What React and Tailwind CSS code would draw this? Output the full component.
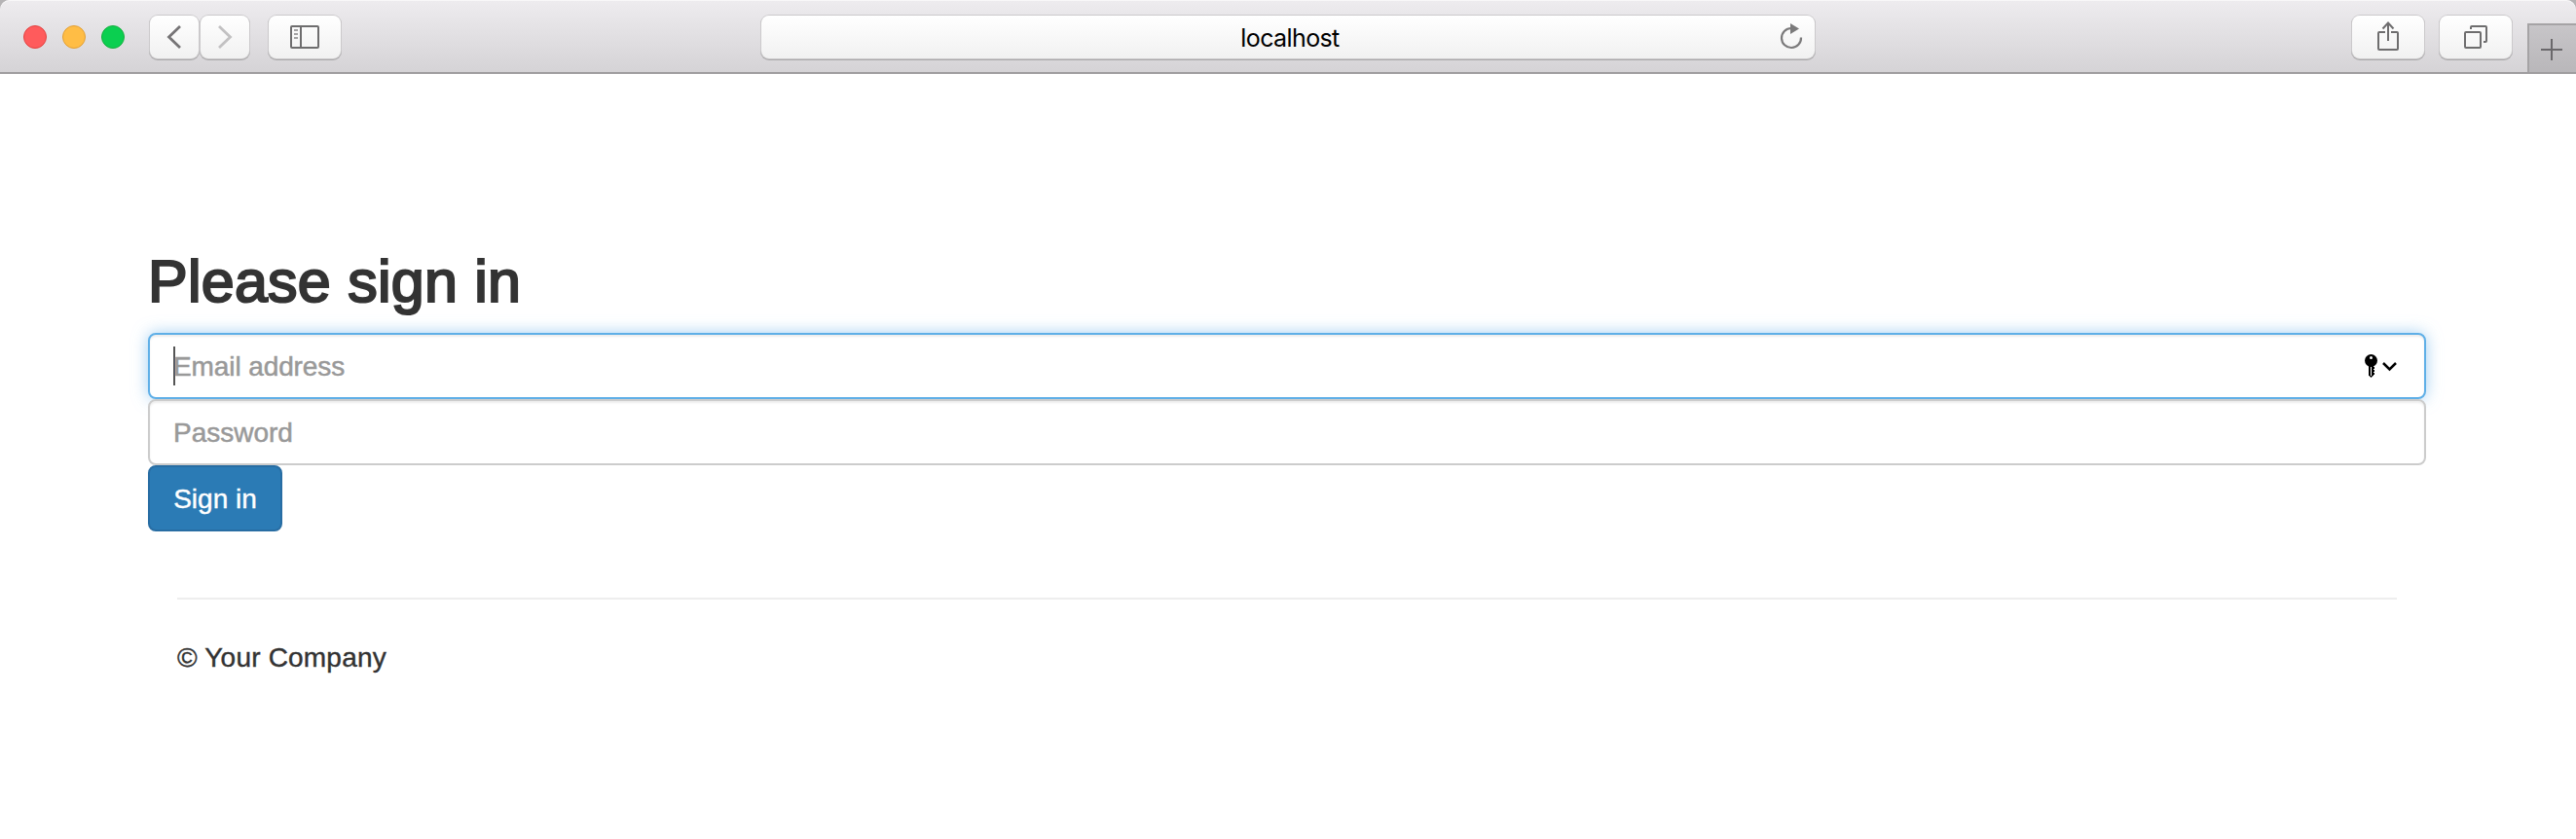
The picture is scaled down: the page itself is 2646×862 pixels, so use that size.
const BUTTON =
  'flex h-[44px] shrink-0 items-center justify-center rounded-[8px] bg-linear-to-b from-white to-[#f1f1f1] shadow-[0_0_0_1px_#cbc9cb,0_1px_0_1px_#a9a8a9]';

function ToolbarButton({ className, label, children }) {
  return (
    <button type="button" aria-label={label} className={`${BUTTON} ${className}`}>
      {children}
    </button>
  );
}

function Toolbar() {
  return (
    <div className="bg-[#b5b3b5]">
      <header className="flex h-[76px] items-start rounded-t-[10px] border-b-2 border-[#9f9d9f] bg-linear-to-b from-[#eeecef] to-[#d5d3d6] pl-6 shadow-[inset_0_1px_0_#f8f7f8]">
        <div className="mt-[26px] flex gap-4">
          <span className="size-6 rounded-full border border-[#e2413f] bg-[#ff5b5c]" />
          <span className="size-6 rounded-full border border-[#e29f34] bg-[#ffbd45]" />
          <span className="size-6 rounded-full border border-[#16ae3e] bg-[#0bcf50]" />
        </div>

        <div className="mt-[16px] ml-[26px] flex gap-[2px]">
          <ToolbarButton label="Back" className="w-[50px]">
            <svg width="50" height="44" fill="none" stroke="#767476" strokeWidth="2.8">
              <path d="M31 11 19.500 22 31 33" />
            </svg>
          </ToolbarButton>
          <ToolbarButton label="Forward" className="w-[50px]">
            <svg width="50" height="44" fill="none" stroke="#c2c1c2" strokeWidth="2.8">
              <path d="M19 11 30.500 22 19 33" />
            </svg>
          </ToolbarButton>
        </div>

        <ToolbarButton label="Sidebar" className="mt-[16px] ml-[20px] w-[74px]">
          <svg width="74" height="44" fill="none" stroke="#6e6d6e" strokeWidth="2">
            <rect x="23" y="11" width="28" height="22" rx="1" />
            <path d="M33 11v22" />
            <path d="M26 15h4M26 19h4M26 23h4" stroke="#a3a2a3" />
          </svg>
        </ToolbarButton>

        <div className={`${BUTTON} relative mt-[16px] ml-[432px] w-[1082px]`}>
          <span className="relative top-[1px] left-[2px] font-['Inter',sans-serif] text-[25px] leading-[44px] tracking-[-0.6px] text-black">
            localhost
          </span>
          <svg className="absolute top-0 right-0" width="50" height="44" fill="none">
            <path d="M26 13a10 10 0 1 0 10 9.500" stroke="#7b7a7b" strokeWidth="2.200" />
            <path d="M25 8v11l9-5.500z" fill="#7b7a7b" />
          </svg>
        </div>

        <ToolbarButton label="Share" className="mt-[16px] ml-[552px] w-[74px]">
          <svg width="74" height="44" fill="none" stroke="#6e6d6e" strokeWidth="2">
            <path d="M34 17h-6q-1 0-1 1v16q0 1 1 1h18q1 0 1-1V18q0-1-1-1h-6" />
            <path d="M37 26V8M31.500 13.500 37 7.500l5.500 6" />
          </svg>
        </ToolbarButton>
        <ToolbarButton label="Tabs" className="mt-[16px] ml-[16px] w-[74px]">
          <svg width="74" height="44" fill="none" stroke="#6e6d6e" strokeWidth="2">
            <rect x="26" y="17" width="16" height="16" rx="1" />
            <path d="M32 14v-2q0-1 1-1h14q1 0 1 1v14q0 1-1 1h-2" />
          </svg>
        </ToolbarButton>

        <button
          type="button"
          aria-label="New tab"
          className="mt-6 ml-auto h-[50px] w-[50px] border-t-2 border-l-2 border-[#a5a3a5] bg-linear-to-b from-[#c7c5c8] to-[#b9b7ba]"
        >
          <svg width="48" height="48" fill="none" stroke="#6a686b" strokeWidth="2">
            <path d="M12 25h22M23 14v22" />
          </svg>
        </button>
      </header>
    </div>
  );
}

export default function App() {
  return (
    <div className="min-h-[862px] w-[2646px] bg-white font-['Liberation_Sans',Arial,sans-serif] text-[28px] leading-[40px] text-[#333]">
      <Toolbar />
      <main className="px-[152px] pt-[180px]">
        <form className="flex flex-col items-start">
          <h2 className="h-[86px] text-[61px] leading-[67px] font-normal tracking-[0.25px] whitespace-nowrap [-webkit-text-stroke:2.2px_#333]">
            Please sign in
          </h2>
          <div className="flex h-[68px] w-[2340px] items-center rounded-[8px] border-2 border-[#5fafe7] bg-white pr-[26px] pl-6 text-[#999] shadow-[inset_0_2px_2px_rgba(0,0,0,0.075),0_0_16px_rgba(102,175,233,0.6)]">
            <span className="-mr-[2px] h-10 w-[2px] bg-[#555]" />
            <span className="grow pt-[2px] tracking-[-0.1px] [-webkit-text-stroke:0.5px_#999]">Email address</span>
            <svg width="36" height="28" fill="none">
              <circle cx="7.500" cy="8.500" r="6.500" fill="#000" />
              <path d="M5 13h5v10.500L7.500 26 5 23.500z" fill="#000" />
              <path d="M10.500 15v8" stroke="#000" strokeDasharray="2 1" />
              <circle cx="7.500" cy="5.500" r="1.500" fill="#fff" />
              <path d="M7.500 15v9" stroke="#fff" />
              <path d="M20 11 26.500 17.500 33 11" stroke="#000" strokeWidth="2.500" />
            </svg>
          </div>
          <div className="flex h-[68px] w-[2340px] items-center rounded-[8px] border-2 border-[#ccc] bg-white px-6 pt-[2px] text-[#999] shadow-[inset_0_2px_2px_rgba(0,0,0,0.075)] [-webkit-text-stroke:0.5px_#999]">
            Password
          </div>
          <button
            type="button"
            className="h-[68px] w-[138px] rounded-[8px] border-2 border-[#286da3] bg-[#2b7bb5] pt-[2px] text-white [-webkit-text-stroke:0.4px_#fff]"
          >
            Sign in
          </button>
        </form>
        <footer className="mr-[32px] ml-[30px] mt-[68px] border-t-2 border-[#eee] pt-10">
          <p className="tracking-[0.2px] [-webkit-text-stroke:0.4px_#333]">© Your Company</p>
        </footer>
      </main>
    </div>
  );
}
